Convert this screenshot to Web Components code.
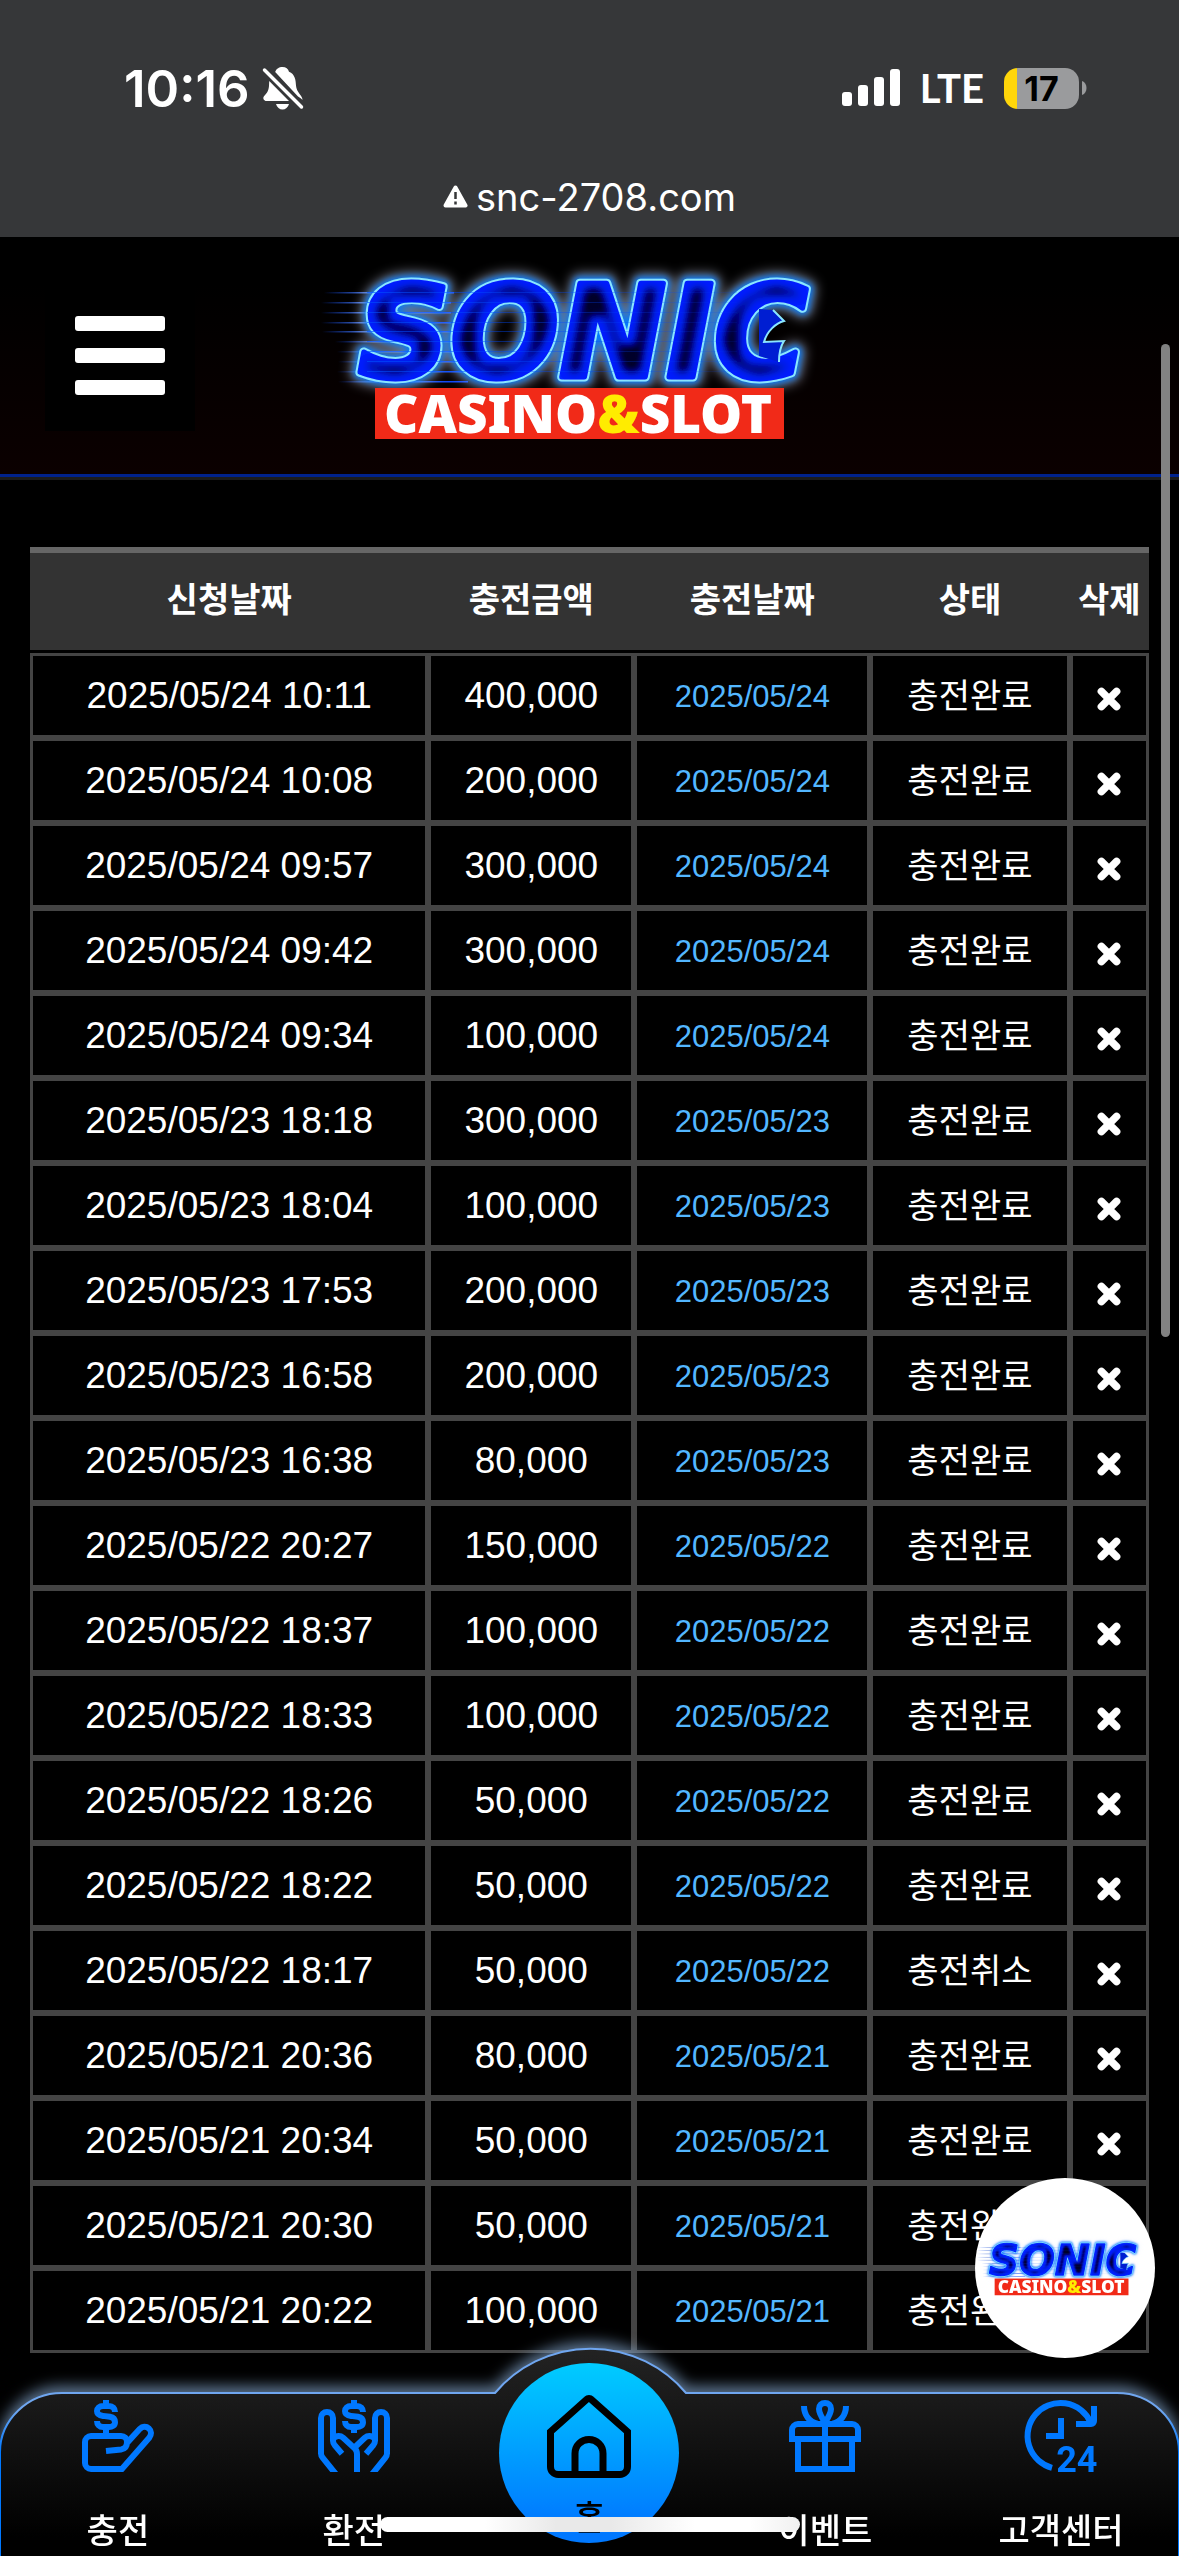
<!DOCTYPE html>
<html lang="ko">
<head>
<meta charset="utf-8">
<meta name="viewport" content="width=device-width, initial-scale=1">
<title>SONIC CASINO&amp;SLOT</title>
<style>
    html, body {
        margin: 0;
        min-height: 100%;
        background: #000;
        color: #fff;
        font-family: "Liberation Sans", "Noto Sans CJK KR", sans-serif;
    }
    body {
        overflow: hidden;
    }
</style>
</head>
<body>
<phone-status time="10:16" network="LTE" battery="17" host="snc-2708.com"></phone-status>
<site-header><sonic-logo></sonic-logo></site-header>
<main><charge-history></charge-history></main>
<chat-badge><sonic-logo></sonic-logo></chat-badge>
<scroll-thumb></scroll-thumb>
<bottom-nav>
    <nav-item icon="charge">충전</nav-item>
    <nav-item icon="withdraw">환전</nav-item>
    <nav-item icon="home" main>홈</nav-item>
    <nav-item icon="gift">이벤트</nav-item>
    <nav-item icon="support">고객센터</nav-item>
</bottom-nav>
<home-indicator></home-indicator>

<script>
class PhoneStatus extends HTMLElement {
    constructor() {
        super();
        this.attachShadow({ mode: 'open' });
    }

    connectedCallback() {
        this.shadowRoot.innerHTML = `
            <style>
                :host {
                    display: block;
                    background: #363739;
                    font-family: Inter, sans-serif;
                }
                .status {
                    display: flex;
                    justify-content: space-between;
                    align-items: center;
                    height: 176px;
                    padding: 0 92px 0 124px;
                    box-sizing: border-box;
                }
                .left, .right {
                    display: flex;
                    align-items: center;
                }
                .left { gap: 12px; }
                .time {
                    font-size: 51px;
                    font-weight: 600;
                }
                .network {
                    margin: 0 20px;
                    font-family: Lato, sans-serif;
                    font-size: 40px;
                    font-weight: 700;
                }
                .battery {
                    display: flex;
                    align-items: center;
                    justify-content: center;
                    width: 75px;
                    height: 41px;
                    border-radius: 14px;
                    background: linear-gradient(90deg, #ffd60a 13px, #9a9b9d 13px);
                    color: #000;
                    font-size: 34px;
                    font-weight: 700;
                }
                .nub { margin-left: 3px; }
                .address {
                    display: flex;
                    justify-content: center;
                    align-items: center;
                    gap: 8px;
                    height: 41px;
                    padding-bottom: 20px;
                    font-size: 38px;
                    line-height: 40px;
                }
                svg { display: block; }
            </style>
            <div class="status">
                <div class="left">
                    <span class="time">${this.getAttribute('time')}</span>
                    <svg width="42" height="44" viewBox="0 0 42 44" fill="#fff">
                        <path d="M20.500 1c-3.500 0-6.500 2-7.300 5L36 30.500c2 1 4.500 3.300 4.500 3.300 0-4-6-7.300-6.500-14-.300-6-1-11.600-7-14C26.200 3 24 1 20.500 1zM7.200 15 27 35H4.500C2 35 .500 32.500 1.800 30.500 4 27.500 6.500 26 7 20z"/>
                        <path d="M14 38h13c-1 3.500-3.500 5.500-6.500 5.500S15 41.500 14 38z"/>
                        <path d="M2.500 4 39.500 41" stroke="#fff" stroke-width="3.500" stroke-linecap="round"/>
                    </svg>
                </div>
                <div class="right">
                    <svg width="58" height="38" viewBox="0 0 58 38" fill="#fff">
                        <rect y="23" width="10" height="14" rx="3"/>
                        <rect x="16" y="16" width="10" height="21" rx="3"/>
                        <rect x="32" y="8" width="10" height="29" rx="3"/>
                        <rect x="48" width="10" height="37" rx="3"/>
                    </svg>
                    <span class="network">${this.getAttribute('network')}</span>
                    <span class="battery">${this.getAttribute('battery')}</span>
                    <svg class="nub" width="5" height="14" viewBox="0 0 5 14"><path d="M0 0c3 1 4.500 4 4.500 7S3 13 0 14z" fill="#9a9b9d"/></svg>
                </div>
            </div>
            <div class="address">
                <svg width="25" height="23" viewBox="0 0 25 23">
                    <path d="M12.500 2.500 22.500 20.500h-20z" fill="#fff" stroke="#fff" stroke-width="4" stroke-linejoin="round"/>
                    <path d="M12.500 7v7M12.500 16.500v3" stroke="#363739" stroke-width="2.500"/>
                </svg>
                <span>${this.getAttribute('host')}</span>
            </div>
        `;
    }
}

class SonicLogo extends HTMLElement {
    constructor() {
        super();
        this.attachShadow({ mode: 'open' });
    }

    connectedCallback() {
        // speed lines running out to the left of the word
        const lines = [[323, 291], [320, 301], [320, 311], [320, 321], [321, 330], [334, 340], [336, 350], [337, 360], [336, 370], [337, 380]]
            .map(([x, y]) => `<rect x="${x}" y="${y}" width="130" height="1.500" fill="url(#speed)"/>`)
            .join('');
        const stripes = [291, 301, 311, 321, 330, 340, 350, 360, 370]
            .map(y => `<rect x="366" y="${y}" width="370" height="1" fill="url(#stripe)"/>`)
            .join('');

        this.shadowRoot.innerHTML = `
            <style>
                :host { display: block; }
                svg {
                    display: block;
                    width: 100%;
                    overflow: visible;
                }
                #sonic {
                    font: italic 700 128px "DejaVu Sans", sans-serif;
                }
                .sub {
                    font: 900 53px "Noto Sans", sans-serif;
                }
            </style>
            <svg viewBox="314 260 550 190">
                <defs>
                    <text id="sonic" x="357" y="376">SONIC</text>
                    <linearGradient id="speed">
                        <stop offset="0" stop-color="#0a49ff" stop-opacity="0"/>
                        <stop offset="0.300" stop-color="#4169c8"/>
                        <stop offset="1" stop-color="#003cff"/>
                    </linearGradient>
                    <linearGradient id="stripe">
                        <stop offset="0" stop-color="#0050ff" stop-opacity="0.600"/>
                        <stop offset="1" stop-color="#0040ff" stop-opacity="0.100"/>
                    </linearGradient>
                    <filter id="core" x="-5%" y="-10%" width="110%" height="120%">
                        <feMorphology in="SourceAlpha" operator="erode" radius="8"/>
                        <feGaussianBlur stdDeviation="4" result="inner"/>
                        <feFlood flood-color="#00002a"/>
                        <feComposite in2="inner" operator="in" result="dark"/>
                        <feMerge>
                            <feMergeNode in="SourceGraphic"/>
                            <feMergeNode in="dark"/>
                            <feMergeNode in="dark"/>
                        </feMerge>
                    </filter>
                    <filter id="glow" x="-10%" y="-30%" width="120%" height="160%">
                        <feGaussianBlur stdDeviation="6"/>
                    </filter>
                    <filter id="halo" x="-10%" y="-30%" width="120%" height="160%">
                        <feGaussianBlur stdDeviation="3"/>
                    </filter>
                </defs>
                ${lines}
                <g stroke-linejoin="round">
                    <use href="#sonic" fill="#fff" stroke="#e1e8ff" stroke-width="20" opacity="0.500" filter="url(#glow)"/>
                    <use href="#sonic" fill="#0078ff" stroke="#0078ff" stroke-width="13" filter="url(#halo)"/>
                    <use href="#sonic" fill="#8ae6ff" stroke="#8ae6ff" stroke-width="9"/>
                    <use href="#sonic" fill="#0026ff" stroke="#0026ff" stroke-width="5" filter="url(#core)"/>
                </g>
                ${stripes}
                <g transform="translate(10 0)">
                    <path d="M748 308 762 309 773 320C765 322 756 330 753 341L773 340C769 346 768 353 768 361L748 355Z" fill="#001ed2"/>
                    <path d="M762 309 773 320C765 322 756 330 753 341L773 340C769 346 768 353 768 361" fill="none" stroke="#8ae6ff" stroke-width="2"/>
                </g>
                <rect x="374" y="387" width="409" height="51" fill="#f12a18"/>
                <text class="sub" x="577" y="432" text-anchor="middle" fill="#fff">CASINO<tspan fill="#ffec00">&amp;</tspan>SLOT</text>
            </svg>
        `;
    }
}

class SiteHeader extends HTMLElement {
    constructor() {
        super();
        this.attachShadow({ mode: 'open' });
        this.shadowRoot.innerHTML = `
            <style>
                :host {
                    display: grid;
                    grid-template-columns: 1fr 550px 1fr;
                    align-items: center;
                    height: 237px;
                    background: linear-gradient(#000 20%, #0b0000);
                    border-bottom: 3px solid #00228c;
                    box-shadow: 0 3px #1c1c1c;
                }
                button {
                    display: flex;
                    flex-direction: column;
                    justify-content: center;
                    align-items: center;
                    gap: 17px;
                    width: 150px;
                    height: 150px;
                    margin-left: 45px;
                    padding: 0;
                    border: 0;
                    background: #000;
                }
                i {
                    width: 90px;
                    height: 15px;
                    border-radius: 3px;
                    background: #fff;
                }
            </style>
            <button type="button" aria-label="메뉴"><i></i><i></i><i></i></button>
            <slot></slot>
        `;
    }
}

const history = [
    ['2025/05/24 10:11', '400,000'],
    ['2025/05/24 10:08', '200,000'],
    ['2025/05/24 09:57', '300,000'],
    ['2025/05/24 09:42', '300,000'],
    ['2025/05/24 09:34', '100,000'],
    ['2025/05/23 18:18', '300,000'],
    ['2025/05/23 18:04', '100,000'],
    ['2025/05/23 17:53', '200,000'],
    ['2025/05/23 16:58', '200,000'],
    ['2025/05/23 16:38', '80,000'],
    ['2025/05/22 20:27', '150,000'],
    ['2025/05/22 18:37', '100,000'],
    ['2025/05/22 18:33', '100,000'],
    ['2025/05/22 18:26', '50,000'],
    ['2025/05/22 18:22', '50,000'],
    ['2025/05/22 18:17', '50,000', '충전취소'],
    ['2025/05/21 20:36', '80,000'],
    ['2025/05/21 20:34', '50,000'],
    ['2025/05/21 20:30', '50,000'],
    ['2025/05/21 20:22', '100,000']
];

class ChargeHistory extends HTMLElement {
    constructor() {
        super();
        this.attachShadow({ mode: 'open' });
    }

    connectedCallback() {
        const rows = history.map(([date, amount, state = '충전완료']) => `
            <tr>
                <td>${date}</td>
                <td>${amount}</td>
                <td><span class="done">${date.split(' ')[0]}</span></td>
                <td class="state">${state}</td>
                <td>
                    <button type="button" aria-label="삭제">
                        <svg width="26" height="26" viewBox="0 0 24 24"><path d="M5 5l14 14M19 5 5 19" stroke="#fff" stroke-width="7" stroke-linecap="round"/></svg>
                    </button>
                </td>
            </tr>
        `).join('');

        this.shadowRoot.innerHTML = `
            <style>
                :host {
                    display: block;
                    padding: 70px 30px 0;
                }
                table {
                    width: 100%;
                    table-layout: fixed;
                    border-spacing: 0;
                }
                .date { width: 35.6%; }
                .amount { width: 18.4%; }
                .day { width: 21.1%; }
                .status { width: 17.8%; }
                th, td {
                    box-sizing: border-box;
                    padding: 0;
                    text-align: center;
                    white-space: nowrap;
                }
                th {
                    height: 106px;
                    border-top: 6px solid #666;
                    border-bottom: 3px solid #000;
                    padding-bottom: 4px;
                    background: #333;
                    font-size: 34px;
                    font-weight: 700;
                    line-height: 40px;
                }
                td {
                    height: 85px;
                    border: 3px solid #444;
                    font-size: 37px;
                    line-height: 42px;
                }
                .done {
                    color: #53b7ff;
                    font-size: 31px;
                }
                .state { font-size: 34px; }
                button {
                    display: block;
                    margin: 0 auto;
                    padding: 6px 0 0;
                    border: 0;
                    background: none;
                }
                svg { display: block; }
            </style>
            <table>
                <colgroup><col class="date"><col class="amount"><col class="day"><col class="status"><col></colgroup>
                <thead>
                    <tr><th>신청날짜</th><th>충전금액</th><th>충전날짜</th><th>상태</th><th>삭제</th></tr>
                </thead>
                <tbody>${rows}</tbody>
            </table>
        `;
    }
}

class ChatBadge extends HTMLElement {
    constructor() {
        super();
        this.attachShadow({ mode: 'open' });
        this.shadowRoot.innerHTML = `
            <style>
                :host {
                    position: fixed;
                    right: 24px;
                    bottom: 198px;
                }
                a {
                    display: grid;
                    align-items: center;
                    width: 180px;
                    height: 180px;
                    border-radius: 50%;
                    background: #fff;
                }
            </style>
            <a href="#chat" aria-label="채팅"><slot></slot></a>
        `;
    }
}

class ScrollThumb extends HTMLElement {
    constructor() {
        super();
        this.attachShadow({ mode: 'open' });
        this.shadowRoot.innerHTML = `
            <style>
                :host {
                    position: fixed;
                    top: 344px;
                    right: 9px;
                    width: 9px;
                    height: 993px;
                    border-radius: 5px;
                    background: #828282;
                }
            </style>
        `;
    }
}

const icons = {
    charge: `
        <path d="M8 0v2M8 9v3M11 4C11 2.800 10.200 2 9 2H7C5.800 2 5 2.800 5 3.700 5 4.800 5.800 5.200 7 5.300L9.300 5.600C10.400 5.800 11 6.400 11 7.400 11 8.500 10 9 9 9H7C5.800 9 5 8.200 5 7"/>
        <path d="M8 17 13 16.500C14.500 16.300 15 15.200 15 14 15 12.800 14.200 12 13 12H3C1.900 12 1 12.900 1 14V21C1 22.100 1.900 23 3 23H13.300L22.400 12.600C23.200 11.600 23.200 10.300 22.300 9.500 21.400 8.700 20.100 8.800 19.300 9.600L15 14.300"/>`,
    withdraw: `
        <path d="M12 0v2M12 9v2M15 4C15 2.800 14.200 2 13 2H11C9.800 2 9 2.800 9 3.700 9 4.800 9.800 5.200 11 5.300L13.300 5.600C14.400 5.800 15 6.400 15 7.400 15 8.500 14 9 13 9H11C9.800 9 9 8.200 9 7"/>
        <path d="M6.200 25 1.600 19.300C1.200 18.800 1 18.400 1 17.800V6C1 4.800 1.900 4 3 4S5 4.800 5 6V13.600C5 14.300 5.200 14.700 5.600 15.100L8 17.900M5 13.300C5.300 12 7.200 11.600 8.400 12.600L12.300 16.200C12.800 16.700 13 17.200 13 18V24"/>
        <path d="M17.800 25 22.400 19.300C22.800 18.800 23 18.400 23 17.800V6C23 4.800 22.100 4 21 4S19 4.800 19 6V13.600C19 14.300 18.800 14.700 18.400 15.100L16 17.900M19 13.300C18.700 12 16.800 11.600 15.600 12.600L12 16"/>`,
    home: `
        <path d="M12.700 1.300 23 10.500V20.500C23 21.700 22.100 22.700 20.800 22.700H3.200C1.900 22.700 1 21.700 1 20.500V10.500L11.300 1.300C11.700.900 12.300.900 12.700 1.300Z"/>
        <path d="M8 22.500V16.700C8 14.400 9.800 12.700 12 12.700S16 14.400 16 16.700V22.500"/>`,
    gift: `
        <path d="M1 14V10C1 8.900 1.900 8 3 8H21C22.100 8 23 8.900 23 10V14M1 13H23M3 13V23H21V13M12 8V23"/>
        <path d="M12 7.500C11 6 10 4.300 10 3 10 1.700 10.900 1 12 1S14 1.700 14 3C14 4.300 13 6 12 7.500ZM5 2C5 5 6.800 7.400 9.500 7.900M19 2C19 5 17.200 7.400 14.500 7.900"/>`,
    support: `
        <path d="M9 22.600A11 11 0 1 1 21.900 7.500M23 2V7C23 7.600 22.600 8 22 8H17M7 12H12V6"/>
        <text x="10.400" y="24">24</text>`
};

class NavItem extends HTMLElement {
    constructor() {
        super();
        this.attachShadow({ mode: 'open' });
    }

    connectedCallback() {
        this.shadowRoot.innerHTML = `
            <style>
                :host { display: block; }
                a {
                    display: flex;
                    flex-direction: column;
                    align-items: center;
                    gap: 34px;
                    padding-top: 52px;
                    color: #fff;
                    font-size: 34px;
                    font-weight: 500;
                    line-height: 50px;
                    text-decoration: none;
                    white-space: nowrap;
                }
                svg {
                    display: block;
                    width: 72px;
                    height: 72px;
                    fill: none;
                    stroke: #0078ff;
                    stroke-width: 2;
                }
                :host([icon="support"]) svg { overflow: visible; }
                text {
                    fill: #0078ff;
                    stroke: none;
                    font: 700 12px Roboto, sans-serif;
                }
                :host([main]) a {
                    box-sizing: border-box;
                    gap: 14px;
                    width: 180px;
                    height: 180px;
                    margin: 15px auto 0;
                    padding-top: 32px;
                    border-radius: 50%;
                    background: linear-gradient(#00ccff, #0078ff 90%);
                    color: #000;
                }
                :host([main]) svg {
                    width: 84px;
                    height: 84px;
                    stroke: #000;
                }
            </style>
            <a href="#${this.getAttribute('icon')}">
                <svg viewBox="0 0 24 24" aria-hidden="true">${icons[this.getAttribute('icon')]}</svg>
                <slot></slot>
            </a>
        `;
    }
}

class BottomNav extends HTMLElement {
    constructor() {
        super();
        this.attachShadow({ mode: 'open' });
        this.shadowRoot.innerHTML = `
            <style>
                :host {
                    position: fixed;
                    left: 0;
                    right: 0;
                    bottom: 0;
                    height: 208px;
                }
                nav {
                    display: grid;
                    grid-template-columns: repeat(5, 1fr);
                    position: relative;
                }
                .back {
                    position: absolute;
                    inset: 0;
                    width: 100%;
                    height: 100%;
                    overflow: visible;
                    filter: drop-shadow(0 -6px 7px rgba(150, 190, 235, 0.6));
                }
            </style>
            <svg class="back" viewBox="0 0 1179 208" preserveAspectRatio="none" aria-hidden="true">
                <defs>
                    <linearGradient id="fill" gradientUnits="userSpaceOnUse" x1="0" y1="0" x2="0" y2="190">
                        <stop offset="0" stop-color="#232323"/>
                        <stop offset="1" stop-color="#000"/>
                    </linearGradient>
                    <linearGradient id="edge" gradientUnits="userSpaceOnUse" x1="0" y1="0" x2="0" y2="104">
                        <stop offset="0" stop-color="#6fa6f0"/>
                        <stop offset="0.600" stop-color="#6fa6f0"/>
                        <stop offset="1" stop-color="#0078ff"/>
                    </linearGradient>
                </defs>
                <path d="M0 212V104C0 72 28 45 62 45H495A125 125 0 0 1 686 45H1117C1151 45 1179 72 1179 104V212Z" fill="url(#fill)" stroke="url(#edge)" stroke-width="2"/>
            </svg>
            <nav><slot></slot></nav>
        `;
    }
}

class HomeIndicator extends HTMLElement {
    constructor() {
        super();
        this.attachShadow({ mode: 'open' });
        this.shadowRoot.innerHTML = `
            <style>
                :host {
                    position: fixed;
                    left: 50%;
                    bottom: 24px;
                    width: 420px;
                    height: 15px;
                    margin-left: -210px;
                    border-radius: 8px;
                    background: linear-gradient(90deg, #fff 25%, #e9e9e9 42%, #e9e9e9 55%, #fff 75%, #fff 88%, #f0f0f0);
                }
            </style>
        `;
    }
}

customElements.define('phone-status', PhoneStatus);
customElements.define('sonic-logo', SonicLogo);
customElements.define('site-header', SiteHeader);
customElements.define('charge-history', ChargeHistory);
customElements.define('chat-badge', ChatBadge);
customElements.define('scroll-thumb', ScrollThumb);
customElements.define('nav-item', NavItem);
customElements.define('bottom-nav', BottomNav);
customElements.define('home-indicator', HomeIndicator);
</script>
</body>
</html>
